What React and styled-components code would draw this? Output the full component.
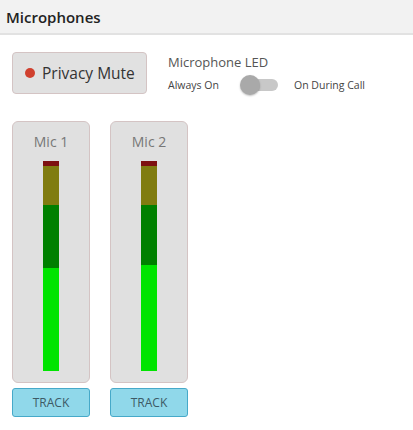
import React from 'react';
import styled, { createGlobalStyle } from 'styled-components';

const GlobalStyle = createGlobalStyle`
  body {
    margin: 0;
    background: #ffffff;
    font-family: "Open Sans", "Noto Sans", sans-serif;
    color: #333;
  }
`;

const Page = styled.div`
  width: 413px;
  height: 430px;
  overflow: hidden;
`;

const Header = styled.div`
  height: 33px;
  background: #f2f2f2;
  border-bottom: 2px solid #e2e2e2;
  display: flex;
  align-items: center;
  padding-left: 6px;
  font-size: 15px;
  font-weight: 600;
  color: #222;
`;

const Body = styled.div`
  padding: 17px 12px 0;
`;

const TopRow = styled.div`
  display: flex;
  align-items: flex-start;
  gap: 21px;
`;

const MuteButton = styled.button`
  width: 135px;
  height: 42px;
  box-sizing: border-box;
  background: #e1e1e1;
  border: 1px solid #d4c4c4;
  border-radius: 4px;
  display: flex;
  align-items: center;
  gap: 7px;
  padding: 0 0 0 12px;
  font-family: inherit;
  font-size: 15.5px;
  color: #333;
`;

const Dot = styled.span`
  width: 10px;
  height: 10px;
  border-radius: 50%;
  background: #d0402e;
`;

const LedSection = styled.div`
  display: flex;
  flex-direction: column;
  padding-top: 1px;
`;

const LedTitle = styled.div`
  font-size: 13px;
  color: #555;
  line-height: 18px;
`;

const LedRow = styled.div`
  display: flex;
  align-items: center;
  margin-top: 7px;
  font-size: 10.5px;
  color: #444;
`;

const Switch = styled.div`
  position: relative;
  width: 34px;
  height: 12px;
  border-radius: 6px;
  background: #c8c8c8;
  margin: 0 16px 0 76px;
`;

const Knob = styled.div`
  position: absolute;
  left: -4px;
  top: -4px;
  width: 20px;
  height: 20px;
  border-radius: 50%;
  background: #a9a9a9;
  box-shadow: 0 1px 2px rgba(0, 0, 0, 0.25);
`;

const LedLabel = styled.span`
  position: absolute;
`;

const MicsRow = styled.div`
  display: flex;
  gap: 20px;
  margin-top: 27px;
`;

const MicColumn = styled.div`
  display: flex;
  flex-direction: column;
  gap: 5px;
  width: 78px;
`;

const MicCard = styled.div`
  height: 262px;
  box-sizing: border-box;
  background: #e0e0e0;
  border: 1px solid #d4c4c4;
  border-radius: 6px;
  display: flex;
  flex-direction: column;
  align-items: center;
  padding-top: 11px;
`;

const MicName = styled.div`
  font-size: 14px;
  color: #777;
  line-height: 18px;
`;

const Meter = styled.div`
  width: 16px;
  height: 210px;
  margin-top: 10px;
  display: flex;
  flex-direction: column;
`;

const Segment = styled.div`
  flex: none;
  background: ${p => p.$color};
`;

const TrackButton = styled.button`
  height: 29px;
  box-sizing: border-box;
  background: #90d8ea;
  border: 1px solid #46a9c9;
  border-radius: 3px;
  font-family: inherit;
  font-size: 12px;
  color: #3d5a66;
`;

const mics = [
  { name: 'Mic 1', level: 103 },
  { name: 'Mic 2', level: 106 },
];

const Mic = ({ name, level }) => (
  <MicColumn>
    <MicCard>
      <MicName>{name}</MicName>
      <Meter>
        <Segment $color="#7e1010" style={{ height: 5 }} />
        <Segment $color="#807c10" style={{ height: 39 }} />
        <Segment $color="#008000" style={{ height: 166 - level }} />
        <Segment $color="#00e400" style={{ height: level }} />
      </Meter>
    </MicCard>
    <TrackButton>TRACK</TrackButton>
  </MicColumn>
);

export default function App() {
  return (
    <Page>
      <GlobalStyle />
      <Header>Microphones</Header>
      <Body>
        <TopRow>
          <MuteButton>
            <Dot />
            Privacy Mute
          </MuteButton>
          <LedSection>
            <LedTitle>Microphone LED</LedTitle>
            <LedRow>
              <LedLabel>Always On</LedLabel>
              <Switch>
                <Knob />
              </Switch>
              <span>On During Call</span>
            </LedRow>
          </LedSection>
        </TopRow>
        <MicsRow>
          {mics.map(m => <Mic key={m.name} {...m} />)}
        </MicsRow>
      </Body>
    </Page>
  );
}
